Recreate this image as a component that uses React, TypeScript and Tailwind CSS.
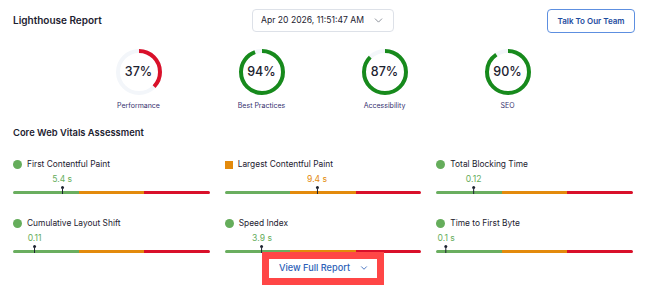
import { ChevronDown } from "lucide-react";

const font = { fontFamily: "Inter, 'Noto Sans', sans-serif" } as const;

type Gauge = { label: string; score: number; color: string };

const GAUGES: Gauge[] = [
  { label: "Performance", score: 37, color: "#d9102a" },
  { label: "Best Practices", score: 94, color: "#178a1c" },
  { label: "Accessibility", score: 87, color: "#178a1c" },
  { label: "SEO", score: 90, color: "#178a1c" },
];

type Metric = { label: string; value: string; pos: number; status: "good" | "avg" };

const METRICS: Metric[] = [
  { label: "First Contentful Paint", value: "5.4 s", pos: 25, status: "good" },
  { label: "Largest Contentful Paint", value: "9.4 s", pos: 47, status: "avg" },
  { label: "Total Blocking Time", value: "0.12", pos: 19, status: "good" },
  { label: "Cumulative Layout Shift", value: "0.11", pos: 11, status: "good" },
  { label: "Speed Index", value: "3.9 s", pos: 19, status: "good" },
  { label: "Time to First Byte", value: "0.1 s", pos: 5, status: "good" },
];

function Ring({ score, color }: { score: number; color: string }) {
  const r = 21;
  const c = 2 * Math.PI * r;
  return (
    <div className="relative w-[48px] h-[48px]">
      <svg width="48" height="48" viewBox="0 0 48 48" className="-rotate-90">
        <circle cx="24" cy="24" r={r} fill="none" stroke="#f3f6fa" strokeWidth="4" />
        <circle
          cx="24"
          cy="24"
          r={r}
          fill="none"
          stroke={color}
          strokeWidth="4"
          strokeDasharray={`${(c * score) / 100} ${c}`}
        />
      </svg>
      <span className="absolute inset-0 flex items-center justify-center text-[12.5px] font-medium text-[#1d2230]">
        {score}%
      </span>
    </div>
  );
}

export default function App() {
  return (
    <div className="w-[646px] h-[290px] bg-white px-[13px] overflow-hidden" style={font}>
      {/* header */}
      <div className="flex items-center justify-between pt-[9px] h-[32px]">
        <h1 className="text-[10px] font-semibold text-[#1d2230] w-[239px]">Lighthouse Report</h1>
        <div className="flex items-center justify-between w-[142px] h-[23px] border border-[#dde1e8] rounded-[4px] pl-[8px] pr-[8px] text-[8.6px] text-[#1d2230] whitespace-nowrap">
          <span>Apr 20 2026, 11:51:47 AM</span>
          <ChevronDown size={13} strokeWidth={1.4} className="text-[#6b717d]" />
        </div>
        <div className="w-[239px] flex justify-end">
          <button className="h-[24px] w-[88px] mr-[-2px] border border-[#5d8fe0] rounded-[4px] text-[8px] font-semibold text-[#1e4c9e] whitespace-nowrap">
            Talk To Our Team
          </button>
        </div>
      </div>

      {/* gauges */}
      <div className="grid grid-cols-4 w-[492px] mx-auto mt-[16px]">
        {GAUGES.map((g) => (
          <div key={g.label} className="flex flex-col items-center">
            <Ring score={g.score} color={g.color} />
            <span className="mt-[5px] text-[7px] text-[#35306e]">{g.label}</span>
          </div>
        ))}
      </div>

      <h2 className="mt-[14px] text-[9.4px] font-semibold text-[#1d2230]">Core Web Vitals Assessment</h2>

      {/* metrics */}
      <div className="grid grid-cols-3 gap-x-[15px] gap-y-[24px] mt-[19px]">
        {METRICS.map((m) => {
          const col = m.status === "good" ? "#65ad5b" : "#e38a0c";
          return (
            <div key={m.label}>
              <div className="flex items-center gap-[5px] h-[12px]">
                {m.status === "good" ? (
                  <span className="w-[9px] h-[9px] rounded-full bg-[#65ad5b]" />
                ) : (
                  <span className="w-[8px] h-[8px] bg-[#e38a0c]" />
                )}
                <span className="text-[8.4px] text-[#1d2230]">{m.label}</span>
              </div>
              <div className="relative h-[20px]">
                <div
                  className="absolute top-[3px] -translate-x-1/2 flex flex-col items-center"
                  style={{ left: `${m.pos}%` }}
                >
                  <span className="text-[8.6px] leading-[11px]" style={{ color: col }}>
                    {m.value}
                  </span>
                  <span className="w-[3px] h-[3px] rounded-full bg-[#1d2230] mt-[1px]" />
                  <span className="w-[1px] h-[5px] bg-[#1d2230]" />
                </div>
              </div>
              <div className="flex h-[3px] rounded-full overflow-hidden">
                <div className="flex-1 bg-[#6aae5f]" />
                <div className="flex-1 bg-[#e38a0c]" />
                <div className="flex-1 bg-[#d9102a]" />
              </div>
            </div>
          );
        })}
      </div>

      <div className="flex justify-center mt-[-1px]">
        <div className="flex items-center gap-[9px] border-[7px] border-[#ff4646] pl-[10px] pr-[8px] h-[33px] text-[9.2px] text-[#2d5fb8] font-medium">
          <span>View Full Report</span>
          <ChevronDown size={10} strokeWidth={2} />
        </div>
      </div>
    </div>
  );
}
